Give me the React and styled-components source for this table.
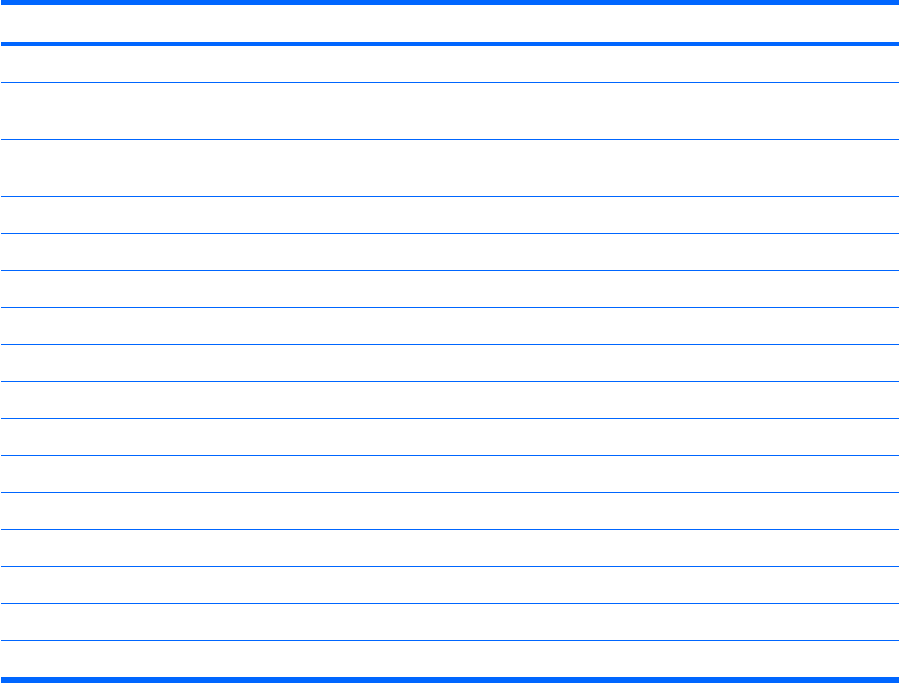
import React from 'react';
import styled, { createGlobalStyle } from 'styled-components';

const GlobalStyle = createGlobalStyle`
  html, body {
    margin: 0;
    padding: 0;
    background: #ffffff;
    font-family: "Liberation Sans", Arial, sans-serif;
  }
`;

const BLUE = '#0066ff';

const rows = [36, 56, 56, 36, 36, 36, 36, 36, 36, 36, 36, 36, 36, 36, 36, 36];

const App = () => {
  return (
    <>
      <GlobalStyle />
      <Page>
        <Table>
          <HeaderRow />
          {rows.map((h, i) => (
            <Row key={i} $height={h} $last={i === rows.length - 1} />
          ))}
        </Table>
      </Page>
    </>
  );
};

const Page = styled.div`
  padding-left: 1px;
  width: 900px;
  height: 683px;
  overflow: hidden;
`;

const Table = styled.div`
  display: flex;
  flex-direction: column;
  width: 898px;
  border-top: 5px solid ${BLUE};
`;

const HeaderRow = styled.div`
  height: 37px;
  border-bottom: 4px solid ${BLUE};
`;

const Row = styled.div`
  height: ${(p) => p.$height}px;
  border-bottom: ${(p) => (p.$last ? '6px' : '1px')} solid ${BLUE};
`;

export default App;
